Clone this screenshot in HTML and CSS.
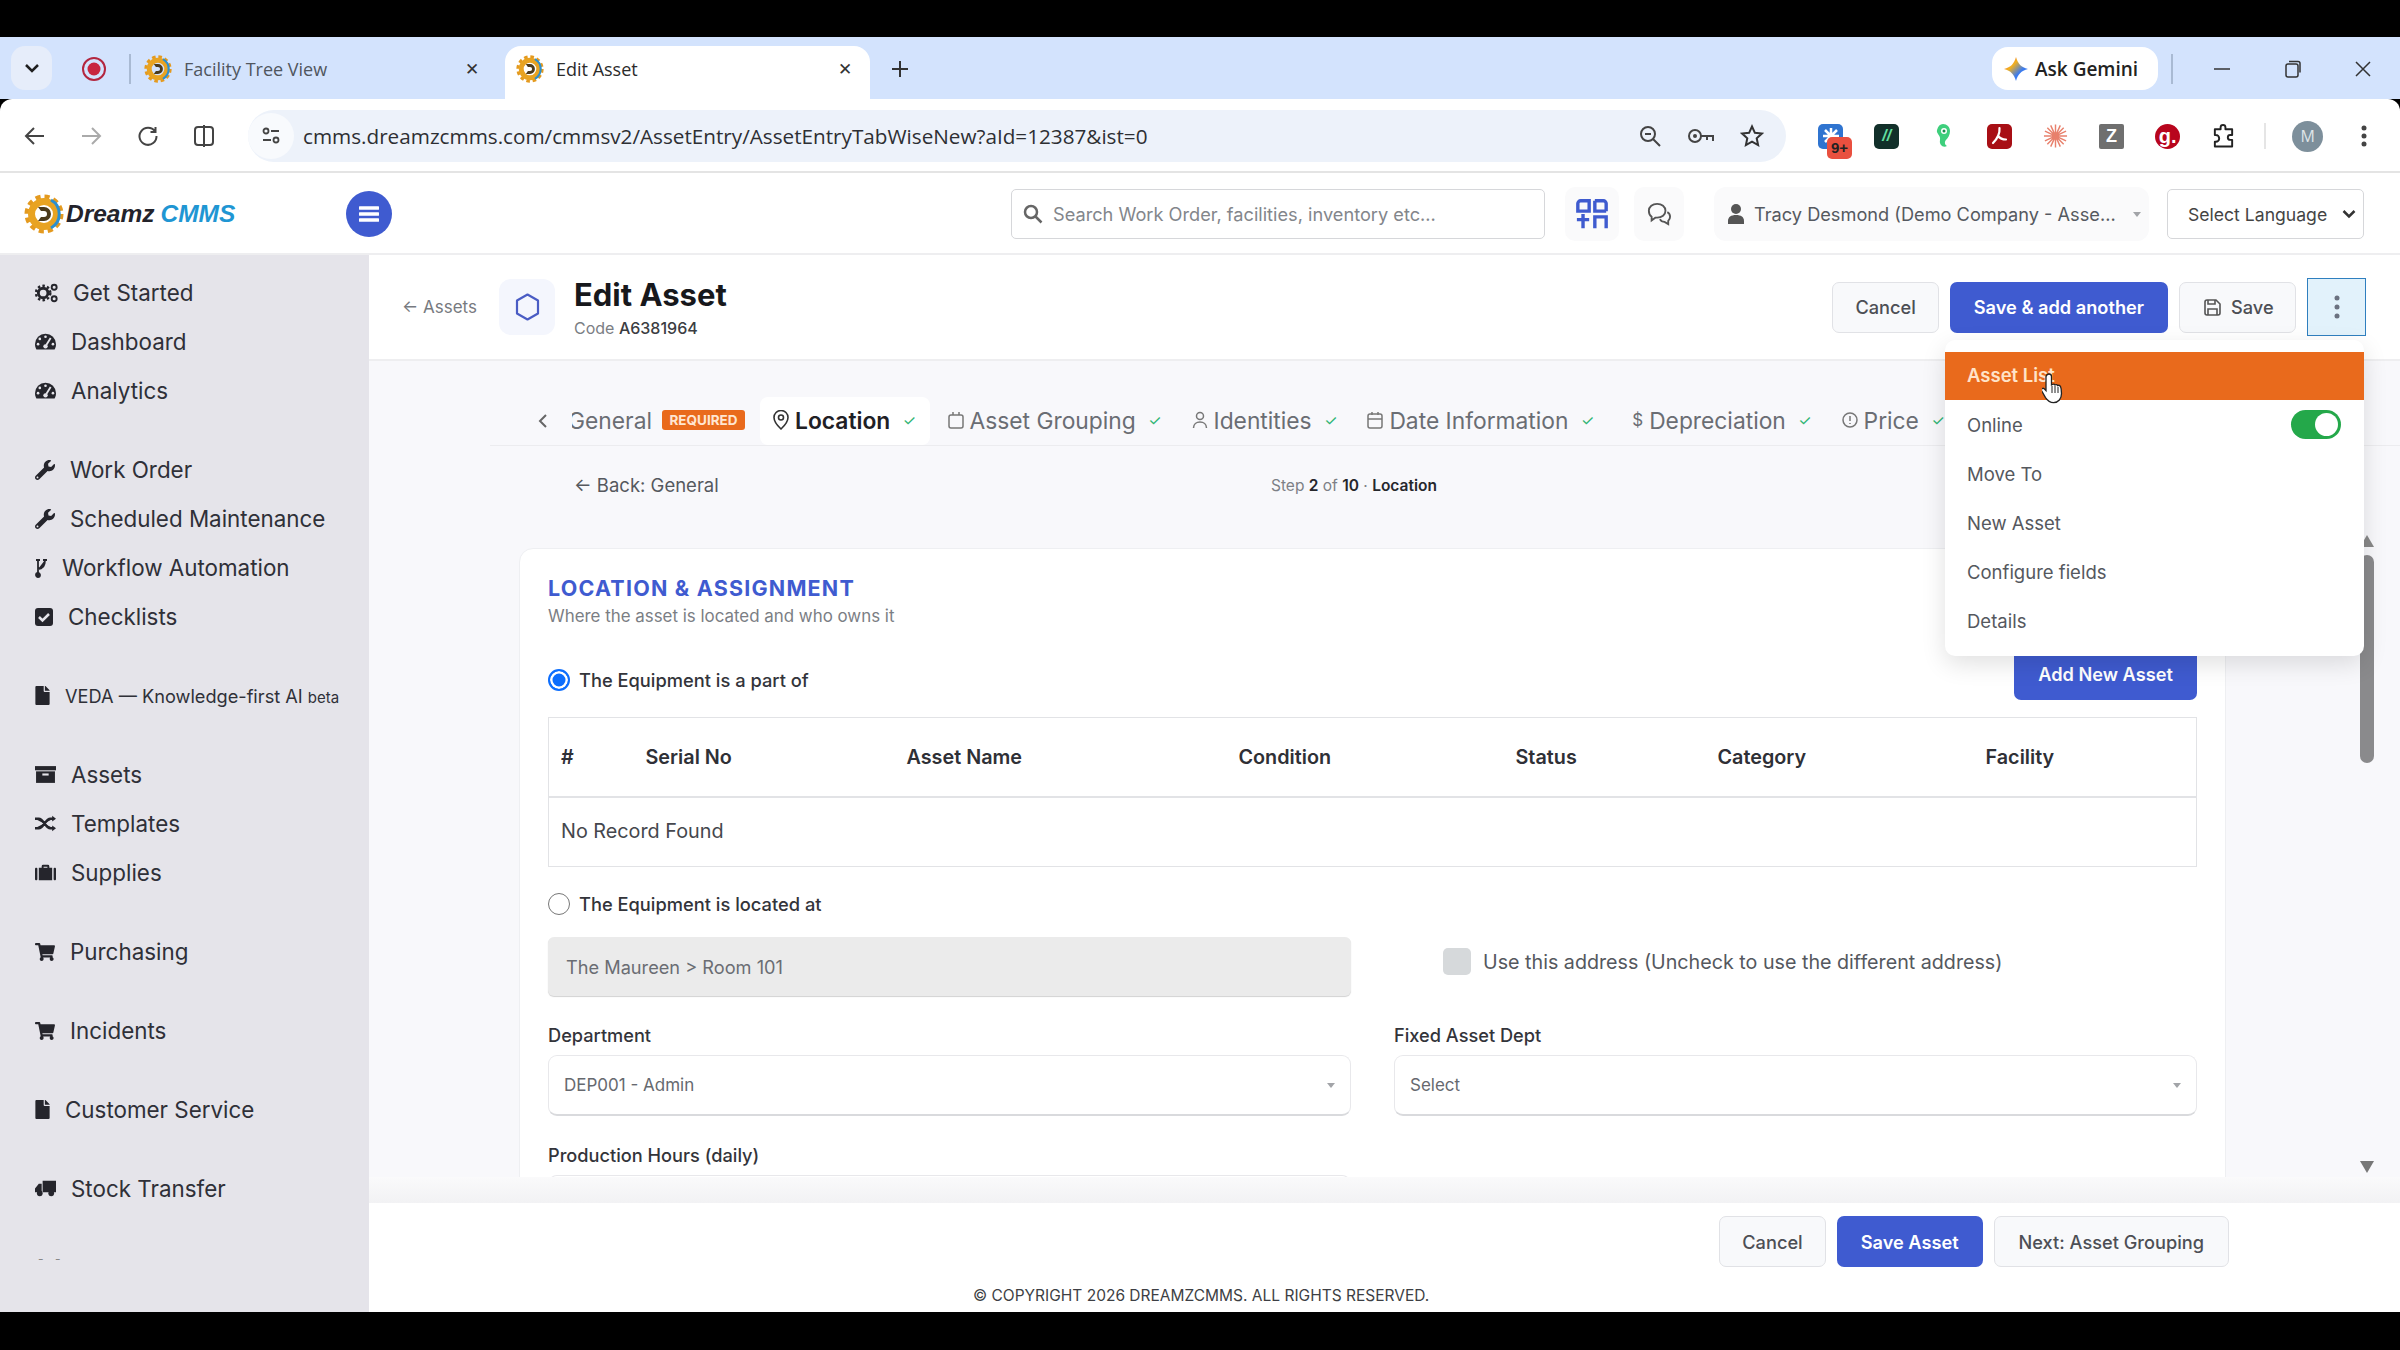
FILE: index.html
```html
<!DOCTYPE html>
<html lang="en">
<head>
    <meta charset="UTF-8">
    <meta name="viewport" content="width=device-width, initial-scale=1.0">
    <title>Edit Asset</title>
    <link rel="stylesheet" href="styles.css">
</head>
<body>
    <svg class="defs" width="0" height="0">
        <defs>
            <linearGradient id="gem" x1="0" y1="0" x2="1" y2="1">
                <stop offset="0" stop-color="#e8453c"/>
                <stop offset="0.35" stop-color="#f2b01e"/>
                <stop offset="0.65" stop-color="#3a7bf0"/>
                <stop offset="1" stop-color="#3a7bf0"/>
            </linearGradient>
            <symbol id="i-gear" viewBox="0 0 40 40">
                <circle cx="20" cy="20" r="17" fill="none" stroke="#e49a1f" stroke-width="5" stroke-dasharray="5 3.9"/>
                <circle cx="20" cy="20" r="12.5" fill="none" stroke="#e8a322" stroke-width="7"/>
                <path d="M27 6a16 16 0 0 1 0 28" fill="none" stroke="#2b8fd0" stroke-width="3"/>
                <path d="M14 13h6a7 7 0 0 1 0 14h-6l3-4h3a3 3 0 0 0 0-6h-3z" fill="#4b3a1c"/>
            </symbol>
            <symbol id="i-wrench" viewBox="0 0 512 512">
                <path d="M507.73 109.1c-2.24-9.03-13.54-12.09-20.12-5.51l-74.36 74.36-67.88-11.31-11.31-67.88 74.36-74.36c6.62-6.62 3.43-17.9-5.66-20.16-47.38-11.74-99.55.91-136.58 37.93-39.64 39.64-50.55 97.1-34.05 147.2L18.74 402.76c-24.99 24.99-24.99 65.51 0 90.5 24.99 24.99 65.51 24.99 90.5 0l213.21-213.21c50.12 16.71 107.47 5.68 147.37-34.22 37.07-37.07 49.7-89.32 37.91-136.73zM64 472c-13.25 0-24-10.75-24-24 0-13.26 10.75-24 24-24s24 10.74 24 24c0 13.25-10.75 24-24 24z"/>
            </symbol>
            <symbol id="i-cart" viewBox="0 0 576 512">
                <path d="M528.12 301.319l47.273-208C578.806 78.301 567.391 64 551.99 64H159.208l-9.166-44.81C147.758 8.021 137.93 0 126.529 0H24C10.745 0 0 10.745 0 24v16c0 13.255 10.745 24 24 24h69.883l70.248 343.435C147.325 417.1 136 435.222 136 456c0 30.928 25.072 56 56 56s56-25.072 56-56c0-15.674-6.447-29.835-16.824-40h209.647C430.447 426.165 424 440.326 424 456c0 30.928 25.072 56 56 56s56-25.072 56-56c0-22.172-12.888-41.332-31.579-50.405l5.517-24.276c3.413-15.018-8.002-29.319-23.403-29.319H218.117l-6.545-32h293.145c11.206 0 20.92-7.754 23.403-18.681z"/>
            </symbol>
            <symbol id="i-file" viewBox="0 0 384 512">
                <path d="M224 136V0H24C10.7 0 0 10.7 0 24v464c0 13.3 10.7 24 24 24h336c13.3 0 24-10.7 24-24V160H248c-13.2 0-24-10.8-24-24zm160-14.1v6.1H256V0h6.1c6.4 0 12.5 2.5 17 7l97.9 98c4.5 4.5 7 10.6 7 16.9z"/>
            </symbol>
            <symbol id="i-gauge" viewBox="0 0 24 20">
                <path d="M12 1a12 12 0 0 0-12 12c0 2.200.6 4.300 1.600 6h20.800c1-1.700 1.600-3.800 1.600-6a12 12 0 0 0-12-12z"/>
                <g fill="#e5e4ea">
                    <circle cx="12" cy="4.500" r="1.500"/><circle cx="5.500" cy="7" r="1.500"/><circle cx="3.500" cy="13" r="1.500"/><circle cx="20.500" cy="13" r="1.500"/><circle cx="12" cy="15.500" r="2.500"/>
                    <path d="M17 5.500l1.800 1-5 8-1.800-1z"/>
                </g>
            </symbol>
        </defs>
    </svg>

    <div class="screen">
        <!-- browser tabs -->
        <div class="tabstrip">
            <div class="tab-list-btn">
                <svg width="16" height="10" viewBox="0 0 16 10"><path d="M2 2l6 6 6-6" fill="none" stroke="#1f1f1f" stroke-width="2.500"/></svg>
            </div>
            <svg class="rec" width="26" height="26" viewBox="0 0 26 26"><circle cx="13" cy="13" r="11" fill="none" stroke="#b3263f" stroke-width="2"/><circle cx="13" cy="13" r="6.500" fill="#c8263f"/></svg>
            <div class="strip-sep"></div>
            <div class="tab">
                <svg class="favicon"><use href="#i-gear"/></svg>
                <span class="tab-title">Facility Tree View</span>
                <span class="tab-x">✕</span>
            </div>
            <div class="tab tab-active">
                <svg class="favicon"><use href="#i-gear"/></svg>
                <span class="tab-title">Edit Asset</span>
                <span class="tab-x">✕</span>
            </div>
            <svg class="new-tab" width="20" height="20" viewBox="0 0 20 20"><path d="M10 2v16M2 10h16" stroke="#333" stroke-width="2"/></svg>
            <div class="gemini">
                <svg width="24" height="26" viewBox="0 0 24 24"><path d="M12 0C14 7 17 10 24 12 17 14 14 17 12 24 10 17 7 14 0 12 7 10 10 7 12 0z" fill="url(#gem)"/></svg>
                <span>Ask Gemini</span>
            </div>
            <div class="strip-sep gem-sep"></div>
            <div class="win-btns">
                <svg width="18" height="18" viewBox="0 0 18 18"><path d="M1 9h16" stroke="#333" stroke-width="1.500"/></svg>
                <svg width="18" height="18" viewBox="0 0 18 18"><rect x="2" y="4" width="12" height="13" rx="2" fill="none" stroke="#333" stroke-width="1.500"/><path d="M5 1.500h9a2 2 0 0 1 2 2v9" fill="none" stroke="#333" stroke-width="1.500"/></svg>
                <svg width="18" height="18" viewBox="0 0 18 18"><path d="M2 2l14 14M16 2L2 16" stroke="#333" stroke-width="1.500"/></svg>
            </div>
        </div>

        <!-- address bar -->
        <div class="toolbar">
            <div class="nav-btns">
                <svg width="22" height="22" viewBox="0 0 22 22"><path d="M20 11H3M10 3l-8 8 8 8" fill="none" stroke="#444" stroke-width="2"/></svg>
                <svg width="22" height="22" viewBox="0 0 22 22"><path d="M2 11h17M12 3l8 8-8 8" fill="none" stroke="#aaa" stroke-width="2"/></svg>
                <svg width="22" height="22" viewBox="0 0 22 22"><path d="M18 6.500A8.500 8.500 0 1 0 19.500 11M18.500 2v5h-5" fill="none" stroke="#444" stroke-width="2"/></svg>
                <svg width="22" height="24" viewBox="0 0 22 24"><rect x="2" y="3" width="18" height="18" rx="3" fill="none" stroke="#444" stroke-width="2"/><path d="M11 1v22" stroke="#444" stroke-width="2"/></svg>
            </div>
            <div class="omnibox">
                <div class="site-info">
                    <svg width="20" height="20" viewBox="0 0 20 20"><circle cx="5" cy="5" r="2.500" fill="none" stroke="#444" stroke-width="1.800"/><path d="M10 5h8M2 14h8" stroke="#444" stroke-width="1.800"/><circle cx="15" cy="14" r="2.500" fill="none" stroke="#444" stroke-width="1.800"/></svg>
                </div>
                <span class="url">cmms.dreamzcmms.com/cmmsv2/AssetEntry/AssetEntryTabWiseNew?aId=12387&amp;ist=0</span>
                <div class="omni-icons">
                    <svg width="24" height="24" viewBox="0 0 24 24"><circle cx="10" cy="10" r="7" fill="none" stroke="#444" stroke-width="2"/><path d="M15 15l7 7M7 10h6" stroke="#444" stroke-width="2"/></svg>
                    <svg width="28" height="20" viewBox="0 0 28 20"><circle cx="8" cy="10" r="6" fill="none" stroke="#444" stroke-width="2"/><circle cx="8" cy="10" r="2" fill="#444"/><path d="M14 10h12v5M20 10v4" fill="none" stroke="#444" stroke-width="2"/></svg>
                    <svg width="24" height="24" viewBox="0 0 24 24"><path d="M12 2.500l2.900 6.300 6.900.8-5.100 4.700 1.400 6.800-6.100-3.400-6.100 3.400 1.400-6.800-5.100-4.700 6.900-.8z" fill="none" stroke="#333" stroke-width="2"/></svg>
                </div>
            </div>
            <div class="ext-row">
                <div class="ext ext-blue">
                    <svg width="18" height="18" viewBox="0 0 18 18"><path d="M9 1v16M1 9h16M3 3l12 12M15 3L3 15" stroke="#fff" stroke-width="2.500"/></svg>
                    <span class="ext-badge">9+</span>
                </div>
                <div class="ext ext-dark"><span>//</span></div>
                <div class="ext ext-plain">
                    <svg width="16" height="26" viewBox="0 0 16 26"><path d="M8 1c4 0 7 3 7 7s-2 7-4 9-1 5 1 6c-4 2-8-1-7-6S1 11 2 7s3-6 6-6z" fill="#3ecf7c"/><circle cx="9" cy="8" r="3" fill="#fff"/><circle cx="9" cy="8" r="1.500" fill="#188c4a"/></svg>
                </div>
                <div class="ext ext-pdf">
                    <svg width="20" height="20" viewBox="0 0 20 20"><path d="M10.500 2C11 8 8 13 4 17M9 10c2 2.500 4 3.500 8 3.500" fill="none" stroke="#fff" stroke-width="2.200" stroke-linecap="round"/></svg>
                </div>
                <div class="ext ext-plain">
                    <svg width="26" height="26" viewBox="0 0 26 26"><path d="M13 1v24M1 13h24M4.500 4.500l17 17M21.500 4.500l-17 17M8 2l10 22M18 2L8 24M2 8l22 10M24 8L2 18" stroke="#e8806c" stroke-width="1.500"/></svg>
                </div>
                <div class="ext ext-zed"><span>Z</span></div>
                <div class="ext ext-g"><span>g.</span></div>
                <div class="ext ext-plain">
                    <svg width="26" height="26" viewBox="0 0 26 26"><path d="M4 6h6V4a2.500 2.500 0 0 1 5 0v2h7v6h-2a2.500 2.500 0 0 0 0 5h2v7H4v-5h1a3 3 0 0 0 0-7H4z" fill="none" stroke="#222" stroke-width="2" stroke-linejoin="round"/></svg>
                </div>
            </div>
            <div class="strip-sep tool-sep"></div>
            <div class="avatar">M</div>
            <svg class="kebab-chrome" width="6" height="22" viewBox="0 0 6 22"><circle cx="3" cy="3" r="2.500" fill="#444"/><circle cx="3" cy="11" r="2.500" fill="#444"/><circle cx="3" cy="19" r="2.500" fill="#444"/></svg>
        </div>

        <!-- app header -->
        <header class="app-header">
            <div class="logo">
                <svg class="logo-mark"><use href="#i-gear"/></svg>
                <span class="logo-a">Dreamz</span>
                <span class="logo-b">CMMS</span>
            </div>
            <div class="burger">
                <svg width="20" height="18" viewBox="0 0 20 18"><path d="M1 3h18M1 9h18M1 15h18" stroke="#fff" stroke-width="3.500" stroke-linecap="round"/></svg>
            </div>
            <div class="search">
                <svg width="20" height="20" viewBox="0 0 20 20"><circle cx="8" cy="8" r="6" fill="none" stroke="#666" stroke-width="2.500"/><path d="M12.500 12.500l6 6" stroke="#666" stroke-width="2.500"/></svg>
                <span>Search Work Order, facilities, inventory etc...</span>
            </div>
            <div class="icon-pill">
                <svg width="34" height="34" viewBox="0 0 36 34" fill="none" stroke="#3f5bcf" stroke-width="3.600"><path d="M3 14V6a3 3 0 0 1 3-3h9v11zM33 14V6a3 3 0 0 0-3-3h-9"/><path d="M21 3v11h12"/><path d="M2 23h13M8.500 17v15M21 32V20h12v12"/></svg>
            </div>
            <div class="icon-pill chat-pill">
                <svg width="24" height="24" viewBox="0 0 26 26" fill="none" stroke="#555" stroke-width="2"><path d="M11 2c5 0 9 3 9 7.500S16 17 11 17H9l-4 3v-4c-2-1.500-3-4-3-6.500C2 5 6 2 11 2z"/><path d="M22 11c2 1 3 3 3 5s-1 3.500-2 4.500V24l-4-2.500c-2 0-4-1-5-3"/></svg>
            </div>
            <div class="user-pill">
                <svg width="18" height="22" viewBox="0 0 18 22"><circle cx="9" cy="6" r="5" fill="#555"/><path d="M1 21v-3c0-4 3-6 8-6s8 2 8 6v3z" fill="#555"/></svg>
                <span>Tracy Desmond (Demo Company - Asse...</span>
                <i class="mini-caret"></i>
            </div>
            <div class="lang">
                <span>Select Language</span>
                <svg width="14" height="10" viewBox="0 0 14 10"><path d="M1.500 2l5.500 5.500L12.500 2" fill="none" stroke="#333" stroke-width="2.500"/></svg>
            </div>
        </header>

        <div class="app-body">
            <nav class="sidebar">
                <div class="nav-group">
                    <a class="nav-item">
                        <svg class="ic ic-cogs" viewBox="0 0 24 20"><circle cx="8.500" cy="10" r="5" fill="none" stroke="#25252c" stroke-width="3"/><circle cx="8.500" cy="10" r="7.500" fill="none" stroke="#25252c" stroke-width="2.500" stroke-dasharray="2.600 2.300"/><circle cx="20" cy="4" r="2.600" fill="none" stroke="#25252c" stroke-width="2"/><circle cx="20" cy="16" r="2.600" fill="none" stroke="#25252c" stroke-width="2"/></svg>
                        Get Started
                    </a>
                    <a class="nav-item"><svg class="ic ic-gauge"><use href="#i-gauge"/></svg>Dashboard</a>
                    <a class="nav-item"><svg class="ic ic-gauge"><use href="#i-gauge"/></svg>Analytics</a>
                </div>
                <div class="nav-group">
                    <a class="nav-item"><svg class="ic ic-wrench"><use href="#i-wrench"/></svg>Work Order</a>
                    <a class="nav-item"><svg class="ic ic-wrench"><use href="#i-wrench"/></svg>Scheduled Maintenance</a>
                    <a class="nav-item">
                        <svg class="ic ic-branch" viewBox="0 0 12 20" fill="none" stroke="#25252c" stroke-width="1.800"><circle cx="3" cy="17" r="2"/><path d="M3 15V3M1 2h4M3 11c5 0 7-3 7-9M8 2h4"/></svg>
                        Workflow Automation
                    </a>
                    <a class="nav-item">
                        <svg class="ic ic-check" viewBox="0 0 18 18"><rect width="18" height="18" rx="3"/><path d="M4 9l3.500 3.500L14 6" fill="none" stroke="#e5e4ea" stroke-width="2.500"/></svg>
                        Checklists
                    </a>
                </div>
                <div class="nav-group">
                    <a class="nav-item nav-small">
                        <svg class="ic ic-file"><use href="#i-file"/></svg>
                        <span>VEDA — Knowledge-first AI <small>beta</small></span>
                    </a>
                </div>
                <div class="nav-group">
                    <a class="nav-item">
                        <svg class="ic ic-box" viewBox="0 0 20 16"><rect width="20" height="4"/><path d="M1 5h18v11H1z"/><rect x="7" y="7" width="6" height="2" fill="#e5e4ea"/></svg>
                        Assets
                    </a>
                    <a class="nav-item">
                        <svg class="ic ic-box" viewBox="0 0 22 16" fill="none" stroke="#25252c" stroke-width="2.500"><path d="M0 3h4c5 0 7 10 12 10h3M0 13h4c5 0 7-10 12-10h3"/><path d="M18 0l4 3-4 3zM18 10l4 3-4 3z" fill="#25252c" stroke="none"/></svg>
                        Templates
                    </a>
                    <a class="nav-item">
                        <svg class="ic ic-box" viewBox="0 0 22 16"><rect y="3" width="2.500" height="13" rx="1"/><rect x="19.500" y="3" width="2.500" height="13" rx="1"/><path d="M4 3h3V1.500A1.500 1.500 0 0 1 8.500 0h5A1.500 1.500 0 0 1 15 1.500V3h3v13H4zM9 3h4V2H9z" fill-rule="evenodd"/></svg>
                        Supplies
                    </a>
                </div>
                <div class="nav-group">
                    <a class="nav-item"><svg class="ic ic-cart"><use href="#i-cart"/></svg>Purchasing</a>
                </div>
                <div class="nav-group">
                    <a class="nav-item"><svg class="ic ic-cart"><use href="#i-cart"/></svg>Incidents</a>
                </div>
                <div class="nav-group">
                    <a class="nav-item"><svg class="ic ic-file"><use href="#i-file"/></svg>Customer Service</a>
                </div>
                <div class="nav-group">
                    <a class="nav-item">
                        <svg class="ic ic-box" viewBox="0 0 22 16"><path d="M8 0h14v12H8zM7 3H4L0 8v4h7z"/><circle cx="5" cy="13" r="3"/><circle cx="17" cy="13" r="3"/></svg>
                        Stock Transfer
                    </a>
                </div>
                <div class="nav-dots">- -</div>
            </nav>

            <main class="main">
                <div class="page-head">
                    <a class="crumb">← Assets</a>
                    <div class="hex-box">
                        <svg width="25" height="28" viewBox="0 0 25 28"><path d="M12.500 1.500l10.500 6v13l-10.500 6-10.500-6v-13z" fill="none" stroke="#4a5cc4" stroke-width="2.200" stroke-linejoin="round"/></svg>
                    </div>
                    <div class="title-block">
                        <h1>Edit Asset</h1>
                        <div class="code">Code <b>A6381964</b></div>
                    </div>
                    <div class="head-actions">
                        <button class="btn btn-light">Cancel</button>
                        <button class="btn btn-primary">Save &amp; add another</button>
                        <button class="btn btn-light btn-save">
                            <svg width="17" height="17" viewBox="0 0 17 17" fill="none" stroke="#555" stroke-width="1.600"><path d="M1 3a2 2 0 0 1 2-2h9l4 4v9a2 2 0 0 1-2 2H3a2 2 0 0 1-2-2z"/><path d="M4 1v4h7V1M4 16v-6h9v6"/></svg>
                            Save
                        </button>
                        <button class="kebab">
                            <svg width="6" height="24" viewBox="0 0 6 24"><circle cx="3" cy="3" r="2.500" fill="#6b7280"/><circle cx="3" cy="12" r="2.500" fill="#6b7280"/><circle cx="3" cy="21" r="2.500" fill="#6b7280"/></svg>
                        </button>
                    </div>
                </div>

                <div class="workspace">
                    <div class="steps">
                        <div class="steps-prev">
                            <svg width="10" height="16" viewBox="0 0 10 16"><path d="M8 2L2 8l6 6" fill="none" stroke="#666" stroke-width="2"/></svg>
                        </div>
                        <div class="steps-scroll">
                            <div class="step-tab step-first">General <span class="req">REQUIRED</span></div>
                            <div class="step-tab step-on">
                                <svg width="16" height="20" viewBox="0 0 16 20" fill="none" stroke="#333" stroke-width="1.600"><path d="M8 19s7-6.500 7-11.500a7 7 0 0 0-14 0C1 12.500 8 19 8 19z"/><circle cx="8" cy="7.500" r="2.500"/></svg>
                                Location <span class="tick">✓</span>
                            </div>
                            <div class="step-tab">
                                <svg width="16" height="18" viewBox="0 0 16 18" fill="none" stroke="#777" stroke-width="1.500"><rect x="1" y="4" width="14" height="13" rx="2"/><path d="M5 1v3M11 1v3"/></svg>
                                Asset Grouping <span class="tick">✓</span>
                            </div>
                            <div class="step-tab">
                                <svg width="16" height="18" viewBox="0 0 16 18" fill="none" stroke="#777" stroke-width="1.500"><circle cx="8" cy="5" r="3.500"/><path d="M1.500 17c0-4 3-6 6.500-6s6.500 2 6.500 6"/></svg>
                                Identities <span class="tick">✓</span>
                            </div>
                            <div class="step-tab">
                                <svg width="16" height="18" viewBox="0 0 16 18" fill="none" stroke="#777" stroke-width="1.500"><rect x="1" y="3" width="14" height="14" rx="2"/><path d="M1 8h14M5 1v3M11 1v3"/></svg>
                                Date Information <span class="tick">✓</span>
                            </div>
                            <div class="step-tab">
                                <span class="dollar">$</span>
                                Depreciation <span class="tick">✓</span>
                            </div>
                            <div class="step-tab">
                                <svg width="16" height="18" viewBox="0 0 16 18" fill="none" stroke="#777" stroke-width="1.500"><circle cx="8" cy="9" r="7"/><path d="M8 5v5M8 12v1"/></svg>
                                Price <span class="tick">✓</span>
                            </div>
                        </div>
                    </div>

                    <div class="step-row">
                        <a class="back-link">← Back: General</a>
                        <div class="step-count">Step <b>2</b> of <b>10</b> · <b class="step-name">Location</b></div>
                    </div>

                    <section class="card">
                        <h2>LOCATION &amp; ASSIGNMENT</h2>
                        <p class="card-sub">Where the asset is located and who owns it</p>

                        <div class="radio-row">
                            <label class="radio-label"><span class="radio radio-on"></span>The Equipment is a part of</label>
                            <button class="btn btn-primary btn-add">Add New Asset</button>
                        </div>

                        <table class="asset-table">
                            <colgroup>
                                <col class="c-num"><col class="c-serial"><col class="c-name"><col class="c-cond"><col class="c-status"><col class="c-cat"><col>
                            </colgroup>
                            <thead>
                                <tr><th>#</th><th>Serial No</th><th>Asset Name</th><th>Condition</th><th>Status</th><th>Category</th><th>Facility</th></tr>
                            </thead>
                            <tbody>
                                <tr><td colspan="7">No Record Found</td></tr>
                            </tbody>
                        </table>

                        <label class="radio-label radio-second"><span class="radio"></span>The Equipment is located at</label>

                        <div class="form-grid address-row">
                            <div class="readonly">The Maureen &gt; Room 101</div>
                            <label class="check-label"><span class="check"></span>Use this address (Uncheck to use the different address)</label>
                        </div>

                        <div class="form-grid">
                            <div class="field">
                                <label>Department</label>
                                <div class="select">DEP001 - Admin <i class="mini-caret"></i></div>
                            </div>
                            <div class="field">
                                <label>Fixed Asset Dept</label>
                                <div class="select select-ph">Select <i class="mini-caret"></i></div>
                            </div>
                            <div class="field">
                                <label>Production Hours (daily)</label>
                                <div class="select"></div>
                            </div>
                        </div>
                    </section>

                    <div class="scrollbar">
                        <i class="arrow-up"></i>
                        <i class="thumb"></i>
                        <i class="arrow-down"></i>
                    </div>
                </div>

                <div class="band"></div>

                <footer class="page-foot">
                    <div class="foot-actions">
                        <button class="btn btn-light">Cancel</button>
                        <button class="btn btn-primary">Save Asset</button>
                        <button class="btn btn-light btn-next">Next: Asset Grouping</button>
                    </div>
                    <div class="copyright">© COPYRIGHT 2026 DREAMZCMMS. ALL RIGHTS RESERVED.</div>
                </footer>

                <!-- open kebab menu -->
                <div class="menu">
                    <a class="menu-item menu-hot">Asset List</a>
                    <a class="menu-item">Online <span class="toggle"></span></a>
                    <a class="menu-item">Move To</a>
                    <a class="menu-item">New Asset</a>
                    <a class="menu-item">Configure fields</a>
                    <a class="menu-item">Details</a>
                </div>
                <svg class="cursor" width="22" height="32" viewBox="0 0 22 32">
                    <path d="M7 2c1.500 0 2.500 1 2.500 2.500V13l1-.5c1-.5 2-.3 2.500.5 1-.6 2.200-.3 2.700.6 1-.5 2.300 0 2.800 1 .7 1.500 1 4 1 7 0 5-3 9-8 9-4 0-6-2-8-5l-4-7c-.7-1.200 1-3 2.500-2l2 2V4.500C4.500 3 5.500 2 7 2z" fill="#fff" stroke="#222" stroke-width="1.300"/>
                    <path d="M10 14v7M13 14v7M16 15v6" stroke="#222" stroke-width="1"/>
                </svg>
            </main>
        </div>
    </div>
</body>
</html>
```
FILE: styles.css
```css
:root {
    --blue: #3f5bd0;
    --ink: #2b2c33;
    --muted: #6f7278;
    --line: #e2e3e6;
    --orange: #e96a1c;
    --side-bg: #e5e4ea;
    --page-bg: #f8f8fb;
}

* {
    box-sizing: border-box;
}

html, body {
    margin: 0;
    background: #000;
}

.defs {
    position: absolute;
}

.screen {
    width: 2400px;
    height: 1350px;
    padding: 37px 0 38px;
    display: flex;
    flex-direction: column;
    background: #000;
    font-family: Inter, "Liberation Sans", sans-serif;
    color: var(--ink);
    overflow: hidden;
}

/* browser chrome */
.tabstrip {
    height: 62px;
    flex: none;
    display: flex;
    align-items: flex-end;
    background: #d3e3fd;
    font-family: "Open Sans", "Liberation Sans", sans-serif;
    font-size: 18px;
}

.tab-list-btn {
    width: 41px;
    height: 44px;
    margin: 0 0 9px 11px;
    display: flex;
    align-items: center;
    justify-content: center;
    background: #e6edfa;
    border-radius: 14px;
}

.rec {
    margin: 0 0 17px 29px;
}

.strip-sep {
    width: 2px;
    height: 30px;
    background: #a9bad3;
}

.tabstrip > .strip-sep {
    margin: 0 0 15px 22px;
}

.tab {
    width: 374px;
    height: 53px;
    padding: 0 26px 8px 13px;
    display: flex;
    align-items: center;
    color: #50565e;
}

.tab-active {
    width: 365px;
    padding: 0 18px 8px 11px;
    background: #fff;
    border-radius: 16px 16px 0 0;
    color: #2b2b2b;
}

.favicon {
    width: 28px;
    height: 28px;
    flex: none;
    margin-right: 12px;
}

.tab-title {
    flex: 1;
}

.tab-x {
    font-size: 17px;
    color: #333;
}

.new-tab {
    margin: 0 0 20px 20px;
}

.gemini {
    width: 166px;
    height: 43px;
    margin: 0 0 9px auto;
    padding-left: 12px;
    display: flex;
    align-items: center;
    gap: 7px;
    background: #fff;
    border-radius: 16px;
    font-size: 19px;
    font-weight: 600;
    color: #222;
}

.tabstrip > .gem-sep {
    margin-left: 13px;
}

.win-btns {
    width: 227px;
    padding: 0 28px 21px 40px;
    display: flex;
    justify-content: space-between;
}

.toolbar {
    height: 74px;
    flex: none;
    padding-top: 2px;
    display: flex;
    align-items: center;
    background: #fff;
    border-bottom: 2px solid #e4e4e4;
    border-radius: 12px 12px 0 0;
    font-family: "Open Sans", "Liberation Sans", sans-serif;
}

.nav-btns {
    width: 248px;
    padding: 0 33px 0 24px;
    display: flex;
    align-items: center;
    justify-content: space-between;
}

.omnibox {
    width: 1538px;
    height: 52px;
    display: flex;
    align-items: center;
    background: #edf2fa;
    border-radius: 26px;
}

.site-info {
    width: 46px;
    height: 46px;
    margin: 0 9px 0 0;
    display: flex;
    align-items: center;
    justify-content: center;
    background: #f8fafd;
    border-radius: 50%;
}

.url {
    font-size: 20.700px;
    color: #2d2f33;
    white-space: nowrap;
}

.omni-icons {
    margin-left: auto;
    padding-right: 22px;
    display: flex;
    align-items: center;
    gap: 25px;
}

.ext-row {
    margin-left: 32px;
    display: flex;
    align-items: center;
    gap: 31.200px;
}

.ext {
    position: relative;
    width: 25px;
    height: 25px;
    display: flex;
    align-items: center;
    justify-content: center;
    border-radius: 5px;
    font-family: "Liberation Sans", sans-serif;
    color: #fff;
    font-weight: 700;
}

.ext-blue { background: #2f74d0; }
.ext-dark { background: #12302a; color: #62e0a0; font-style: italic; font-size: 16px; }
.ext-pdf { background: #a80f15; }
.ext-zed { background: #6f6f6f; font-size: 18px; border-radius: 2px; }
.ext-g { background: #b8051d; border-radius: 50%; font-size: 20px; }
.ext-plain { overflow: visible; }

.ext-badge {
    position: absolute;
    left: 9px;
    top: 13px;
    width: 25px;
    height: 22px;
    background: #e9503f;
    border-radius: 5px;
    color: #222;
    font-size: 15px;
    line-height: 22px;
    text-align: center;
}

.toolbar > .tool-sep {
    height: 26px;
    margin-left: 28px;
    background: #e5e5e5;
}

.avatar {
    width: 31px;
    height: 31px;
    margin-left: 26px;
    background: #7d8f9b;
    border-radius: 50%;
    color: #dfe5e8;
    font-size: 16px;
    line-height: 31px;
    text-align: center;
}

.kebab-chrome {
    margin-left: 38px;
}

/* app header */
.app-header {
    height: 82px;
    flex: none;
    padding-top: 2px;
    display: flex;
    align-items: center;
    background: #fff;
    border-bottom: 2px solid #eeeef0;
}

.logo {
    width: 346px;
    padding-left: 24px;
    display: flex;
    align-items: center;
    font-family: "Liberation Sans", sans-serif;
    font-style: italic;
    font-weight: 700;
    font-size: 24.500px;
}

.logo-mark {
    width: 40px;
    height: 40px;
    margin-right: 2px;
}

.logo-a {
    color: #23232b;
    margin-right: 6px;
}

.logo-b {
    color: #1f96d3;
}

.burger {
    width: 46px;
    height: 46px;
    display: flex;
    align-items: center;
    justify-content: center;
    background: var(--blue);
    border-radius: 50%;
}

.search {
    width: 534px;
    height: 50px;
    margin-left: 619px;
    padding-left: 11px;
    display: flex;
    align-items: center;
    gap: 10px;
    border: 1.500px solid #d6d7da;
    border-radius: 5px;
    font-size: 18.200px;
    color: #83868b;
}

.icon-pill {
    width: 54px;
    height: 54px;
    margin-left: 20px;
    display: flex;
    align-items: center;
    justify-content: center;
    background: #fafafb;
    border-radius: 10px;
}

.chat-pill {
    margin-left: 15px;
    width: 50px;
}

.user-pill {
    width: 435px;
    height: 54px;
    margin-left: 30px;
    padding-left: 13px;
    display: flex;
    align-items: center;
    gap: 9px;
    background: #fafafb;
    border-radius: 12px;
    font-size: 18.200px;
    color: #555960;
    white-space: nowrap;
}

.user-pill svg {
    flex: none;
}

.user-pill .mini-caret {
    margin-left: 8px;
}

.mini-caret {
    width: 0;
    height: 0;
    border-left: 4px solid transparent;
    border-right: 4px solid transparent;
    border-top: 5px solid #a2a4a8;
}

.lang {
    width: 197px;
    height: 50px;
    margin-left: 18px;
    padding: 0 7px 0 20px;
    display: flex;
    align-items: center;
    justify-content: space-between;
    border: 1.500px solid #d6d7da;
    border-radius: 5px;
    font-size: 17.600px;
    color: #444;
}

/* sidebar */
.app-body {
    flex: 1;
    min-height: 0;
    display: flex;
}

.sidebar {
    width: 369px;
    flex: none;
    padding-top: 13px;
    background: var(--side-bg);
    overflow: hidden;
}

.nav-group + .nav-group {
    margin-top: 30px;
}

.nav-item {
    height: 49px;
    padding-left: 35px;
    display: flex;
    align-items: center;
    gap: 15px;
    font-size: 22.400px;
    color: #2f3038;
    white-space: nowrap;
}

.nav-small {
    font-size: 18.200px;
    gap: 15px;
}

.nav-small small {
    font-size: 15px;
}

.ic {
    flex: none;
    fill: #25252c;
}

.ic-cogs { width: 23px; height: 20px; }
.ic-gauge { width: 21px; height: 19px; }
.ic-wrench { width: 20px; height: 20px; }
.ic-branch { width: 12px; height: 20px; }
.ic-check { width: 18px; height: 18px; }
.ic-file { width: 15px; height: 19px; }
.ic-box { width: 21px; height: 17px; }
.ic-cart { width: 20px; height: 18px; }

.nav-dots {
    margin-top: 40px;
    padding-left: 38px;
    font-size: 12px;
    letter-spacing: 4px;
    color: #888;
    line-height: 12px;
}

/* main column */
.main {
    position: relative;
    flex: 1;
    min-width: 0;
    display: flex;
    flex-direction: column;
}

.page-head {
    height: 106px;
    flex: none;
    padding-left: 33px;
    display: flex;
    align-items: center;
    background: #fff;
    border-bottom: 2px solid #eeeef0;
}

.crumb {
    width: 97px;
    font-size: 17px;
    color: #777a80;
    white-space: nowrap;
}

.hex-box {
    width: 56px;
    height: 56px;
    margin-right: 19px;
    display: flex;
    align-items: center;
    justify-content: center;
    background: #f4f6fd;
    border-radius: 12px;
}

.title-block h1 {
    margin: 0;
    font-size: 31px;
    font-weight: 700;
    line-height: 38px;
    color: #17181c;
}

.code {
    margin-top: 4px;
    font-size: 16px;
    color: #7b7e84;
}

.code b {
    font-weight: 500;
    color: #3b3d42;
}

.head-actions {
    margin-left: auto;
    padding-right: 34px;
    display: flex;
    align-items: center;
    gap: 11px;
}

.btn {
    height: 51px;
    padding: 0 22px;
    display: inline-flex;
    align-items: center;
    gap: 10px;
    font-family: inherit;
    font-size: 18.200px;
    border-radius: 7px;
    white-space: nowrap;
}

.btn-light {
    background: #f8f9fb;
    border: 1.500px solid #e1e2e6;
    color: #4d4f55;
    font-weight: 500;
}

.btn-primary {
    padding: 0 24px;
    background: var(--blue);
    border: 0;
    color: #fff;
    font-weight: 600;
}

.btn-save {
    width: 117px;
    padding: 0 0 0 24px;
}

.btn-next {
    padding: 0 24px;
}

.kebab {
    width: 59px;
    height: 58px;
    padding: 0;
    display: flex;
    align-items: center;
    justify-content: center;
    background: #e2f2fb;
    border: 1.500px solid #2f7fbf;
}

/* dropdown */
.menu {
    position: absolute;
    left: 1576px;
    top: 85px;
    width: 419px;
    height: 316px;
    padding-top: 12px;
    background: #fff;
    border-radius: 10px;
    box-shadow: 0 8px 24px rgba(0, 0, 0, 0.12);
    font-size: 18.500px;
    color: #55585e;
}

.menu-item {
    height: 49px;
    padding: 0 23px 0 22px;
    display: flex;
    align-items: center;
    justify-content: space-between;
}

.menu-hot {
    height: 48px;
    padding-bottom: 3px;
    background: var(--orange);
    color: #ffe3c8;
    font-weight: 600;
}

.toggle {
    position: relative;
    width: 50px;
    height: 29px;
    background: #24a84a;
    border-radius: 15px;
}

.toggle::after {
    content: '';
    position: absolute;
    right: 3px;
    top: 3px;
    width: 23px;
    height: 23px;
    background: #fff;
    border-radius: 50%;
}

.cursor {
    position: absolute;
    left: 1673px;
    top: 117px;
}

/* workspace */
.workspace {
    position: relative;
    flex: 1;
    min-height: 0;
    padding-top: 36px;
    background: var(--page-bg);
    overflow: hidden;
}

.steps {
    height: 48px;
    margin-left: 121px;
    display: flex;
    align-items: center;
    box-shadow: 0 1px 0 #ececef;
}

.steps-prev {
    width: 82px;
    height: 48px;
    padding-left: 48px;
    display: flex;
    align-items: center;
    flex: none;
}

.steps-scroll {
    flex: 1;
    min-width: 0;
    display: flex;
    align-items: center;
    gap: 5px;
    overflow: hidden;
}

.step-tab {
    height: 48px;
    flex: none;
    padding: 0 12px 2px 13px;
    display: flex;
    align-items: center;
    gap: 6px;
    font-size: 22.800px;
    color: #6a6d73;
    white-space: nowrap;
}

.step-first {
    margin-left: -17px;
    padding-right: 10px;
    gap: 10px;
}

.step-on {
    padding-right: 13.500px;
    background: #fff;
    border-radius: 8px;
    color: #1f2025;
    font-weight: 600;
}

.req {
    padding: 0 7.500px;
    height: 20px;
    background: var(--orange);
    border-radius: 3px;
    color: #ffe6d2;
    font-size: 13.500px;
    font-weight: 700;
    line-height: 20px;
}

.tick {
    margin-left: 6.500px;
    font-size: 15px;
    font-weight: 400;
    color: #2fb574;
}

.dollar {
    margin-left: 8px;
    font-size: 17px;
}

.step-row {
    height: 40px;
    margin-top: 20px;
    padding-left: 205px;
    display: flex;
    align-items: center;
}

.back-link {
    width: 697px;
    font-size: 18.500px;
    color: #55585e;
}

.step-count {
    font-size: 15.500px;
    color: #7d8086;
}

.step-count b {
    color: #26272c;
    font-weight: 600;
}

.card {
    width: 1707px;
    margin: 43px 0 0 150px;
    padding: 26px 28px 0 28px;
    background: #fff;
    border: 1px solid #eeeff2;
    border-radius: 14px;
}

.card h2 {
    margin: 0;
    font-size: 21.500px;
    font-weight: 700;
    line-height: 26px;
    letter-spacing: 1.200px;
    color: var(--blue);
}

.card-sub {
    margin: 4px 0 0;
    font-size: 16.900px;
    line-height: 22px;
    color: #7b7e84;
}

.radio-row {
    height: 73px;
    display: flex;
    align-items: flex-end;
    justify-content: space-between;
}

.radio-label {
    display: flex;
    align-items: center;
    gap: 9px;
    font-size: 18.300px;
    font-weight: 500;
    color: #33343a;
}

.radio-row .radio-label {
    align-self: center;
    margin-top: 33px;
}

.radio {
    width: 22px;
    height: 22px;
    flex: none;
    background: #fff;
    border: 1.500px solid #777;
    border-radius: 50%;
}

.radio-on {
    background: #0d6efd;
    border: 2px solid #0d6efd;
    box-shadow: inset 0 0 0 2.500px #fff;
}

.btn-add {
    width: 183px;
    padding: 0 0 2px;
    justify-content: center;
}

.asset-table {
    width: 100%;
    margin-top: 17px;
    table-layout: fixed;
    border-collapse: collapse;
    border: 1.500px solid var(--line);
    font-size: 19.800px;
}

.c-num { width: 85px; }
.c-serial { width: 261px; }
.c-name { width: 332px; }
.c-cond { width: 277px; }
.c-status { width: 202px; }
.c-cat { width: 268px; }

.asset-table th {
    height: 79px;
    padding: 0 12px;
    border-bottom: 2.500px solid var(--line);
    font-weight: 600;
    text-align: left;
    color: #2f3036;
}

.asset-table td {
    height: 70px;
    padding: 0 12px 2px;
    color: #45474d;
}

.radio-second {
    margin-top: 26px;
}

.form-grid {
    display: grid;
    grid-template-columns: 803px 803px;
    column-gap: 43px;
}

.address-row {
    margin-top: 22px;
    align-items: start;
}

.readonly {
    height: 59px;
    padding-left: 18px;
    display: flex;
    align-items: center;
    background: #ebebeb;
    border-radius: 6px;
    box-shadow: 0 1px 1px rgba(0, 0, 0, 0.18);
    font-size: 18.200px;
    color: #6a6d73;
}

.check-label {
    height: 49px;
    margin-left: 49px;
    display: flex;
    align-items: center;
    gap: 12px;
    font-size: 19.700px;
    color: #55585e;
    white-space: nowrap;
}

.check {
    width: 28px;
    height: 27px;
    flex: none;
    background: #d6d9db;
    border-radius: 5px;
}

.field {
    margin-top: 26px;
}

.field label {
    display: block;
    height: 26px;
    font-size: 18.200px;
    font-weight: 500;
    line-height: 26px;
    color: #33343a;
}

.select {
    height: 61px;
    margin-top: 7px;
    padding: 0 15px;
    display: flex;
    align-items: center;
    justify-content: space-between;
    background: #fff;
    border: 1px solid #e8e8eb;
    border-bottom: 2px solid #d9dadd;
    border-radius: 9px;
    font-size: 17px;
    color: #66696f;
}

.field + .field + .field {
    margin-top: 26px;
}

/* scrollbar */
.scrollbar {
    position: absolute;
    left: 1990px;
    top: 174px;
    width: 15px;
    height: 638px;
    display: flex;
    flex-direction: column;
    align-items: center;
}

.arrow-up,
.arrow-down {
    width: 0;
    height: 0;
    border-left: 7px solid transparent;
    border-right: 7px solid transparent;
}

.arrow-up {
    border-bottom: 12px solid #888;
}

.arrow-down {
    margin-top: auto;
    border-top: 12px solid #777;
}

.thumb {
    width: 14px;
    height: 208px;
    margin-top: 8px;
    background: #8a8a8c;
    border-radius: 7px;
}

.band {
    height: 26px;
    flex: none;
    background: linear-gradient(#fafafb, #f2f2f4);
}

/* bottom bar */
.page-foot {
    height: 109px;
    flex: none;
    padding-top: 13px;
    background: #fff;
}

.foot-actions {
    padding-right: 171px;
    display: flex;
    justify-content: flex-end;
    gap: 11px;
}

.copyright {
    margin-top: 19px;
    padding-left: 604px;
    font-size: 15.500px;
    color: #3d3f44;
    white-space: nowrap;
}
```
